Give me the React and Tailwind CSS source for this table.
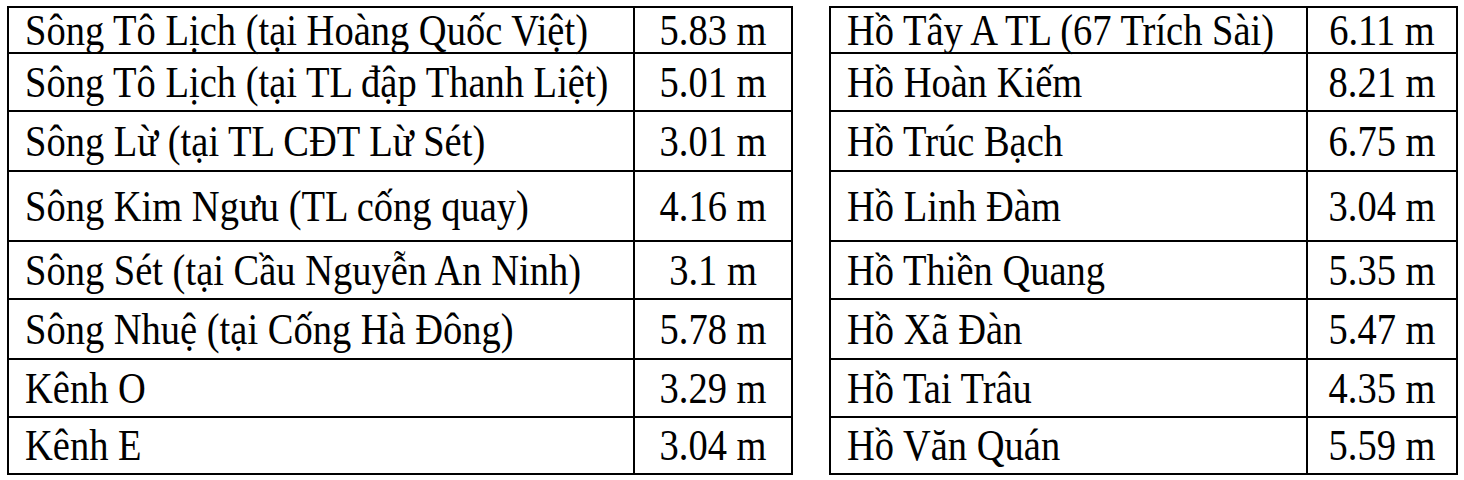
const leftRows = [
  ["Sông Tô Lịch (tại Hoàng Quốc Việt)", "5.83 m"],
  ["Sông Tô Lịch (tại TL đập Thanh Liệt)", "5.01 m"],
  ["Sông Lừ (tại TL CĐT Lừ Sét)", "3.01 m"],
  ["Sông Kim Ngưu (TL cống quay)", "4.16 m"],
  ["Sông Sét (tại Cầu Nguyễn An Ninh)", "3.1 m"],
  ["Sông Nhuệ (tại Cống Hà Đông)", "5.78 m"],
  ["Kênh O", "3.29 m"],
  ["Kênh E", "3.04 m"],
];

const rightRows = [
  ["Hồ Tây A TL (67 Trích Sài)", "6.11 m"],
  ["Hồ Hoàn Kiếm", "8.21 m"],
  ["Hồ Trúc Bạch", "6.75 m"],
  ["Hồ Linh Đàm", "3.04 m"],
  ["Hồ Thiền Quang", "5.35 m"],
  ["Hồ Xã Đàn", "5.47 m"],
  ["Hồ Tai Trâu", "4.35 m"],
  ["Hồ Văn Quán", "5.59 m"],
];

// khoảng cách giữa các đường kẻ ngang
const heights = ["h-[46px]", "h-[58px]", "h-[60px]", "h-[70px]", "h-[58px]", "h-[60px]", "h-[58px]", "h-[57px]"];

function LevelTable({ rows, nameWidth, valueWidth }) {
  return (
    <table className="border-collapse border-2 border-black">
      <tbody>
        {rows.map(([name, value], i) => (
          <tr key={i} className={heights[i]}>
            <td className={`${nameWidth} border-2 border-black pl-4 align-middle whitespace-nowrap`}>
              <span className="inline-block scale-y-[1.15]">{name}</span>
            </td>
            <td className={`${valueWidth} border-2 border-black text-center align-middle whitespace-nowrap`}>
              <span className="inline-block scale-y-[1.15]">{value}</span>
            </td>
          </tr>
        ))}
      </tbody>
    </table>
  );
}

export default function App() {
  return (
    <div className="w-[1464px] h-[480px] bg-white text-black pt-[6px] pl-[7px] font-['Liberation_Serif','Times_New_Roman',serif] text-[38.5px] leading-none">
      <div className="flex gap-[36px]">
        <LevelTable rows={leftRows} nameWidth="w-[626px]" valueWidth="w-[158px]" />
        <LevelTable rows={rightRows} nameWidth="w-[477px]" valueWidth="w-[150px]" />
      </div>
    </div>
  );
}
